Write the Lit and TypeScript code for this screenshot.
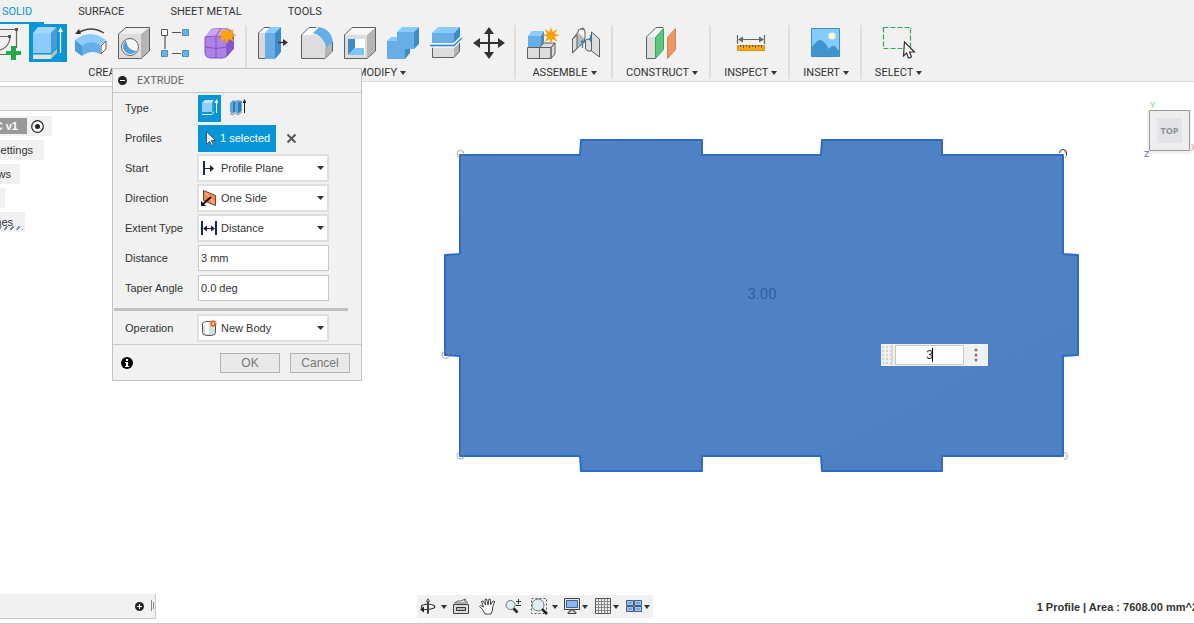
import { LitElement, html, css, svg, nothing } from "lit";
import { customElement, state, property } from "lit/decorators.js";

const INK = "#5f5f5f";

const icons: Record<string, unknown> = {
  sketch: svg`<g fill="none" stroke="#666" stroke-width="1.2"><path d="M0 2.5h26M27.5 4v17M4 27.5h16M1 9.5h20"/><path d="M21 9c0 9-6 15-16 15"/></g><path fill="#555" d="M26 1h3v3h-3zM19 8h3v3h-3z"/><path fill="#23a84c" d="M22 19h5v5h5v4h-5v5h-5v-5h-5v-4h5z"/>`,
  extrude: svg`<path fill="#a3d7fd" d="M1 6 6 0h19l-6 6z"/><path fill="#8bcbfd" d="M1 6h18v20H1z"/><path fill="#4b9bd6" d="m19 6 6-6v20l-6 6z"/><path fill="#e2e2e2" d="M1 27.500h18V32H1z"/><path fill="#bcbcbc" d="m19 27.500 6-6V26l-6 6z"/><path d="M28.500 4v22" stroke="#fff" stroke-width="1.300"/><path fill="#fff" d="m28.500 0 2.500 5h-5z"/>`,
  revolve: svg`<path fill="#8bcbfd" d="M0 13Q15 1 31 13l-6 6q-9-6-18 1z"/><path fill="#4b9bd6" d="M0 13l7 6v10l-7-5z"/><path fill="#66aee5" d="M7 19q9-7 18-1v9q-9-5-18 2z"/><path d="m26 19 5-5v8l-5 5z" fill="#fff" stroke="#555"/><path d="M3 6q13-8 26 0" fill="none" stroke="#444" stroke-width="1.300"/><path fill="#333" d="m0 7 4-5 2 5z"/>`,
  hole: svg`<path fill="#ddd" d="M1 7h22v24H1z"/><path fill="#efefef" d="m1 7 7-6h23l-8 6z"/><path fill="#b5b5b5" d="m23 7 8-6v23l-8 7z"/><path fill="none" stroke="${INK}" d="M.5 7 8 .5h23.500V24L23 31.500H.5z"/><circle cx="12" cy="20" r="8.500" fill="#f5f5f5" stroke="#666"/><path fill="#4e9fdc" d="M8 13.500A7.500 7.500 0 1 0 18.500 24q-9 0-10.500-10.500z"/>`,
  pattern: svg`<path d="M4 9v13M11 5.500h9M11 26.500h9" stroke="#555" stroke-width="1.200"/><path fill="#fff" stroke="#555" d="M.5 2.500h6v6h-6z"/><path fill="#69b2e8" stroke="#4b91c7" d="M21.500 2.500h6v6h-6zM.5 23.500h6v6h-6zM21.500 23.500h6v6h-6z"/>`,
  form: svg`<path fill="#ad82e8" d="m1 10 6-8q2-1 5-1h10q8 1 8 8v12l-7 8q-2 2-5 2H6q-5-1-5-6z"/><path fill="#c9a6f5" d="M2 10q4-8 8-8h12l-5 8z"/><path fill="#8659c8" d="m22 10 8-3v14l-7 8z"/><path fill="none" stroke="#8453c0" d="M1 10q11-2 22 0v19M1 20q12 3 22 0l7-6M12 9v22M12 9l5-8M1 10v15q0 6 6 6h11q3 0 5-2l7-8"/><path fill="#fba505" d="m23 0 2 5 5-3-2 5 5 1-5 2 2 5-5-3-2 5-2-5-5 3 2-5-5-2 5-1-2-5 5 3z"/>`,
  press: svg`<path fill="#fff" d="m1 6 5-5h5L7 6z"/><path fill="#d8d8d8" d="M1 6h6v25H1z"/><path fill="none" stroke="${INK}" d="M7 31.500H.5V6L6 .5h6"/><path fill="#8bcbfd" d="m7 6 5-6h11l-6 6z"/><path fill="#66aee5" d="M7 6h10v26H7z"/><path fill="#3e8bc8" d="m17 6 6-6v25l-6 7z"/><path stroke="#333" d="M20 15.500h7" stroke-width="1.400"/><path fill="#333" d="m25 12 5 3.500-5 3.500z"/>`,
  fillet: svg`<path fill="#ddd" d="M1 8h12q11 2 11 15v8H1z"/><path fill="#fff" d="m1 8 7-7h8l-5 7z"/><path fill="#b5b5b5" d="m24 21 7-6v9l-7 7z"/><path fill="none" stroke="${INK}" d="M15 .5H8L.5 8v23.500H24l7.500-7.500V15"/><path fill="#66aee5" d="M18 0q12 2 14 15l-7 6Q23 9 12 6z"/>`,
  shell: svg`<path fill="#ddd" d="M1 8h22v23H1z"/><path fill="#f5f5f5" d="m1 8 7-7h23l-8 7z"/><path fill="#b5b5b5" d="m23 8 8-7v23l-8 7z"/><path fill="none" stroke="${INK}" d="M.5 8 8 .5h23.500V24L23 31.500H.5z"/><path fill="#fff" d="M4 12h17v16H4z"/><path fill="#3e8bc8" d="M4 12h7v9l-7 7z"/><path fill="#7fc5fa" d="m4 28 7-7h9v7z"/>`,
  combine: svg`<path fill="#8bcbfd" d="m0 14 4-4h7v4zM10 5l5-5h17l-5 5z"/><path fill="#66aee5" d="M0 14h10V5h17v17h-9v10H0z"/><path fill="#3e8bc8" d="m27 5 5-5v17l-5 5zM18 22h5v4l-5 6z"/>`,
  split: svg`<path fill="#8bcbfd" d="m2 6 6-6h22l-6 6z"/><path fill="#66aee5" d="M2 6h22v10H2z"/><path fill="#3e8bc8" d="m24 6 6-6v10l-6 6z"/><path fill="#ddd" d="M2 21h22v9H2z"/><path fill="#b5b5b5" d="m24 21 5-5v9l-5 5z"/><path fill="none" stroke="${INK}" d="M2.500 20.500v10H24l5.500-6V15"/><path fill="none" stroke="#f1f1f1" stroke-width="4" d="M0 18.500h24l8-8"/><path fill="none" stroke="#1d87d8" stroke-width="1.300" d="M0 18.500h24l8-7.500"/>`,
  move: svg`<path fill="none" stroke="#333" stroke-width="2" d="M16 4v24M4 16h24"/><path fill="#333" d="m16 0 5 7H11zM16 32l5-7H11zM0 16l7-5v10zM32 16l-7-5v10z"/>`,
  component: svg`<path fill="#8bcbfd" d="m1 9 4-5h12l-3 5z"/><path fill="#66aee5" d="M1 9h13v11H1z"/><path fill="#3e8bc8" d="m14 9 3-5v11l-3 5z"/><path fill="#ddd" stroke="${INK}" d="M.5 20.500h12v11H.5zM12.500 20.500 17 16h11l-4 4.500zM12.500 20.500H24v11H12.500zM24 20.500l4-4.500v11l-4 4.500z"/><path fill="#f7a105" d="m24 0 1.500 5 5-3-3 5 5 1-5 2 3 5-5-3-1.500 5-1.500-5-5 3 3-5-5-2 5-1-3-5 5 3z"/>`,
  joint: svg`<g stroke="${INK}"><path fill="#bbb" d="m2.500 12 7-9q4-4 5 0v12l-6 5-6 6z"/><path fill="#ddd" d="M7 8v13l-4.500 5V12zM29.500 12l-8-7v19l8 6zM21.500 13q-6-2-6 1v8q2 3 6 2"/><path fill="#f6f6f6" d="M8 5q0-3 3-3t4 2v8"/></g><path stroke="#1d87d8" stroke-width="1.300" d="M12.500 15v6M20.500 8v5"/><path fill="#1d87d8" d="m12.500 12 2 4h-4zM20.500 15l2-4h-4z"/>`,
  plane: svg`<path fill="#ddd" d="M1 10h8v21H1z"/><path fill="#f8f8f8" d="m1 10 9-9h7L9 10z"/><path fill="none" stroke="${INK}" d="M9 31.500H.5V10L10 .5h7"/><path fill="#5ac77f" stroke="#39a35b" d="m9.500 10.500 8-9v21l-8 9z"/><path fill="#e99860" stroke="#cf8452" d="m21.500 10.500 8-9v21l-8 9z"/>`,
  measure: svg`<path fill="none" stroke="#666" stroke-width="1.200" d="M2.500 8v9M29.500 8v9M4 12.500h24"/><path fill="#666" d="m3 12.500 5-3v6zM29 12.500l-5-3v6z"/><path fill="#fba919" stroke="#dc910c" d="M2.500 18.500h27v5h-27z"/><path stroke="#6b592a" d="M5.500 18v2M8.500 18v3M11.500 18v2M14.500 18v3M17.500 18v2M20.500 18v3M23.500 18v2M26.500 18v3"/>`,
  image: svg`<path fill="#84cbff" stroke="#3d8dcb" d="M1.500 1.500h28v28h-28z"/><path fill="#3f93ce" d="M2 20q5-7 8-7 4 0 9 9 3-5 6-3l4 5v5H2z"/><circle cx="22" cy="9" r="3.500" fill="#fffbd0"/>`,
  select: svg`<path fill="none" stroke="#2aab58" stroke-width="1.200" stroke-dasharray="5 2" d="M.5.5h27v21H.5z"/><path fill="#fff" stroke="#333" stroke-width="1.200" d="m21.500 15 10 10h-5l2 5-3 1-2-5-3 3z"/>`,
};

const cursor = svg`<path fill="#eee" stroke="#456" d="m4.500 1.500 9 9h-4l2 4-2 1-2-4-3 3z"/>`;

@customElement("cad-icon")
export class CadIcon extends LitElement {
  @property() name = "";
  static styles = css`:host{display:block;width:32px;height:32px}svg{display:block;overflow:visible}`;
  render() {
    return html`<svg width="32" height="32" viewBox="0 0 32 32" aria-hidden="true">${icons[this.name] ?? nothing}</svg>`;
  }
}

const groups = [
  { label: "CREATE", tools: ["sketch", "extrude", "revolve", "hole", "pattern", "form"] },
  { label: "MODIFY", tools: ["press", "fillet", "shell", "combine", "split", "move"] },
  { label: "ASSEMBLE", tools: ["component", "joint"] },
  { label: "CONSTRUCT", tools: ["plane"] },
  { label: "INSPECT", tools: ["measure"] },
  { label: "INSERT", tools: ["image"] },
  { label: "SELECT", tools: ["select"] },
];

@customElement("cad-header")
export class CadHeader extends LitElement {
  static styles = css`
    :host { display: block; background: #f1f1f1; border-bottom: 1px solid #dcdcdc; overflow: hidden; font: 11px/14px Roboto, sans-serif; color: #333; }
    button { font: inherit; color: inherit; background: none; border: 0; padding: 0; margin: 0; }
    .tabs { display: flex; gap: 22px; margin-left: -10px; }
    .tab { box-sizing: border-box; height: 24px; padding: 2px 12px 0; border-bottom: 2px solid transparent; white-space: nowrap; }
    .tab.on { color: #0696d7; border-color: #0696d7; }
    .tools { display: flex; margin-left: -22px; height: 57px; }
    .group { display: flex; flex-direction: column; align-items: center; padding: 0 6px 0 8px; }
    .group + .group { border-left: 2px solid #dedede; border-image: linear-gradient(transparent 2px, #dedede 2px, #dedede 54px, transparent 54px) 1; }
    .row { display: flex; gap: 5px; }
    .tool { width: 38px; height: 38px; display: grid; place-items: center; }
    .tool.on { background: #0696d7; }
    .label { display: flex; align-items: center; gap: 3px; padding: 4px 5px 0; white-space: nowrap; }
    .caret { width: 0; border: 3px solid transparent; border-top: 4px solid #333; border-bottom: 0; }
  `;
  render() {
    return html`
      <nav class="tabs">
        ${["SOLID", "SURFACE", "SHEET METAL", "TOOLS"].map((t, i) => html`<button class="tab ${i ? "" : "on"}">${t}</button>`)}
      </nav>
      <div class="tools">
        ${groups.map((g) => html`<div class="group">
          <div class="row">${g.tools.map((t) => html`<button class="tool ${t === "extrude" ? "on" : ""}" aria-label=${t}><cad-icon name=${t}></cad-icon></button>`)}</div>
          <button class="label">${g.label}<span class="caret"></span></button>
        </div>`)}
      </div>`;
  }
}

const fieldIcons: Record<string, unknown> = {
  start: svg`<path stroke="#142a58" stroke-width="2" d="M3 1v14"/><path stroke="#223" d="M4 8.500h7"/><path fill="#223" d="m9 5 4 3.500L9 12z"/>`,
  direction: svg`<path fill="#f58a48" stroke="#6b4632" d="m2.500.5 12 5v10l-12-5z"/><path stroke="#ffb382" stroke-width="2" d="m5 3 8 10"/><path stroke="#111" stroke-width="2" d="m2 14 8-7"/><path fill="#111" d="M0 16v-5l5 5z"/>`,
  distance: svg`<path stroke="#142a58" stroke-width="2" d="M1 1v14M15 1v14"/><path stroke="#223" d="M3 8.500h10"/><path fill="#223" d="m2 8.500 4-3v6zM14 8.500l-4-3v6z"/>`,
  body: svg`<path fill="#d9dce2" stroke="#455" d="M1.500 4q0-2.500 6-2.500h2q5 1 5 3v8q0 3-6.500 3t-6.500-3z"/><path fill="#fff" d="M4 5h4v9H4z"/><ellipse cx="7" cy="4" rx="5" ry="2" fill="#fff"/><path stroke="#e3442c" stroke-width="1.300" d="M12 0v7M8.500 3.500h7M9.500 1l5 5M14.500 1l-5 5"/><circle cx="12" cy="3.500" r="1.500" fill="#ffd44a"/>`,
};

@customElement("extrude-dialog")
export class ExtrudeDialog extends LitElement {
  @state() private distance = "3 mm";
  @state() private taper = "0.0 deg";
  static styles = css`
    :host { display: block; box-sizing: border-box; background: #f1f1f1; border: 1px solid #c3c3c3; font: 11px/14px "Liberation Sans", Arial, sans-serif; color: #333; }
    button, input, select { font: inherit; color: inherit; margin: 0; border-radius: 0; box-sizing: border-box; }
    header { display: flex; align-items: center; gap: 10px; height: 23px; padding-left: 5px; border-bottom: 1px solid #c8c8c8; font-family: Roboto, sans-serif; color: #666; }
    svg { display: block; }
    .row { display: grid; grid-template-columns: 72px 132px; align-items: center; height: 30px; padding-left: 12px; }
    .pair { display: flex; align-items: center; padding-left: 1px; }
    .kind { width: 23px; height: 27px; border: 0; background: none; padding: 0; display: grid; place-items: center; margin-right: 5px; }
    .kind.on { background: #0696d7; }
    .picked { background: #0696d7; color: #fff; border: 0; height: 27px; padding: 0 6px 0 4px; display: flex; align-items: center; gap: 2px; white-space: nowrap; }
    .clear { border: 0; background: none; padding: 0; margin-left: 11px; }
    .choice { display: grid; align-items: center; background: #fff; border: 2px solid #dfdfdf; height: 28px; box-sizing: border-box; }
    .choice > * { grid-area: 1 / 1; }
    .choice svg { margin-left: 2px; pointer-events: none; }
    .choice svg.caret { justify-self: end; margin-right: 3px; }
    select { appearance: none; width: 100%; height: 24px; border: 0; background: none; padding: 0 0 0 22px; }
    .row input { width: 131px; height: 26px; border: 1px solid #c8c8c8; background: #fff; padding: 0 2px; margin-left: 1px; }
    hr { border: 0; height: 3px; background: #c0c0c0; margin: 5px 13px 2px 1px; }
    footer { display: flex; align-items: center; gap: 10px; border-top: 1px solid #c8c8c8; padding: 8px 11px 7px 8px; margin-top: 1px; }
    footer button { width: 60px; height: 20px; padding: 0; border: 1px solid #b3b3b3; background: #e9e9e9; color: #777; font-size: 12px; }
    .info { margin-right: auto; }
  `;
  private choice(id: string, label: string, value: string, icon: string) {
    return html`<div class="row"><label for=${id}>${label}</label>
      <div class="choice"><select id=${id}><option>${value}</option></select>
        <svg width="16" height="16" viewBox="0 0 16 16">${fieldIcons[icon]}</svg>
        <svg class="caret" width="7" height="4" viewBox="0 0 7 4"><path fill="#333" d="M0 0h7L3.500 4z"/></svg>
      </div></div>`;
  }
  render() {
    return html`
      <header><svg width="9" height="9" viewBox="0 0 9 9"><circle cx="4.500" cy="4.500" r="4.500" fill="#222"/><path stroke="#fff" d="M2 4.500h5"/></svg>EXTRUDE</header>
      <div class="row"><span>Type</span><div class="pair">
        <button class="kind on" aria-label="Extrude"><svg width="16" height="18" viewBox="0 0 16 18"><path fill="#c3e5fe" d="m0 4 3-3h9l-2 3z"/><path fill="#8fcdfa" d="M0 4h10v9H0z"/><path fill="#4694cd" d="m10 4 2-3v9l-2 3z"/><path fill="none" stroke="#fff" d="M0 15.500h10l2-3M14.500 2v12"/><path fill="#fff" d="m14.500 0 2 4h-4z"/></svg></button>
        <button class="kind" aria-label="Thin extrude"><svg width="16" height="18" viewBox="0 0 16 18"><path fill="#5ba9de" d="m0 4 3-3 2 1 3-1 4 1v10l-4 3-3-2-3 2-2-2z"/><path fill="#3079b3" d="m3 4 2-2v11l-2 1zM8 4l3-2v10l-3 2z"/><path fill="none" stroke="#999" d="m0 15 3 1 2-2 3 2 4-3"/><path stroke="#222" d="M14.500 2v12"/><path fill="#222" d="m14.500 0 2 4h-4z"/></svg></button>
      </div></div>
      <div class="row"><span>Profiles</span><div class="pair">
        <button class="picked"><svg width="16" height="16" viewBox="0 0 16 16">${cursor}</svg>1 selected</button>
        <button class="clear" aria-label="Clear"><svg width="9" height="9" viewBox="0 0 9 9"><path stroke="#555" stroke-width="2" d="m.5.5 8 8M8.500.5l-8 8"/></svg></button>
      </div></div>
      ${this.choice("start", "Start", "Profile Plane", "start")}
      ${this.choice("direction", "Direction", "One Side", "direction")}
      ${this.choice("extent", "Extent Type", "Distance", "distance")}
      <div class="row"><label for="dist">Distance</label><input id="dist" .value=${this.distance} @input=${(e: Event) => (this.distance = (e.target as HTMLInputElement).value)} /></div>
      <div class="row"><label for="taper">Taper Angle</label><input id="taper" .value=${this.taper} @input=${(e: Event) => (this.taper = (e.target as HTMLInputElement).value)} /></div>
      <hr />
      ${this.choice("operation", "Operation", "New Body", "body")}
      <footer><svg class="info" width="12" height="12" viewBox="0 0 12 12"><circle cx="6" cy="6" r="6" fill="#000"/><path fill="#fff" d="M5 2h2v2H5zM4 5h3v4h1v1H4V9h1V6H4z"/></svg><button>OK</button><button>Cancel</button></footer>`;
  }
}

const navItems = [
  { id: "Orbit", caret: true, w: 18, art: svg`<path fill="none" stroke="#333" stroke-width="1.200" d="M4 11Q-1 7 9 6q9 1 6 4l-5 1.500H3"/><path fill="#fff" stroke="#444" d="M8.500 15.500v-12h-1L9 .8l1.500 2.700h-1v12z"/><path fill="#222" d="m1 11.500 4-3v6z"/>` },
  { id: "Look at", caret: false, w: 17, art: svg`<path fill="#ddd" stroke="#444" d="M.5 6.500h15v9H.5z"/><path fill="#bbb" stroke="#333" d="M3.500 9.500h9v3h-9z"/><path fill="#eee" stroke="#666" d="m1.500 5 3-2h3l5-2-1 2h2l1 2z"/>` },
  { id: "Pan", caret: false, w: 17, art: svg`<path fill="#fff" stroke="#444" stroke-linejoin="round" d="M5.500 15 4 12 .5 8.500l1-1L4.500 9 2.500 3.500l1.500-.5L6.500 7 6 1.500l1.500-.5L9 7l1-6 1.500.500L11.500 7l2.500-4 1.500.500L13.500 10v2L12 16H6z"/>` },
  { id: "Zoom", caret: false, w: 17, art: svg`<circle cx="5.500" cy="7" r="4.500" fill="#dbeef2" stroke="#777"/><path stroke="#222" stroke-width="2.500" d="m8.500 10.500 4 4"/><path stroke="#333" d="M11 3.500h5M13.500 1v5M11 7.500h5"/>` },
  { id: "Fit", caret: true, w: 17, art: svg`<path fill="none" stroke="#555" stroke-dasharray="2 2" d="M.5.5h15v15H.5z"/><circle cx="7" cy="7" r="6" fill="#dbeef2" stroke="#777"/><path stroke="#222" stroke-width="2.500" d="m11 11 5 5"/>` },
  { id: "Display", caret: true, w: 16, art: svg`<path fill="#e4e8ee" stroke="#444" d="M.5.5h15v11H.5z"/><path fill="#8fb8ec" stroke="#3863a0" d="M2.500 2.500h11v7h-11z"/><path fill="#ddd" stroke="#444" d="M6 12h4v2h2v1.500H4V14h2z"/>` },
  { id: "Grid", caret: true, w: 16, art: svg`<path fill="#eee" stroke="#555" d="M.5.5h15v15H.5z"/><path stroke="#888" d="M3.500 1v14M6.500 1v14M9.500 1v14M12.500 1v14M1 3.500h14M1 6.500h14M1 9.500h14M1 12.500h14"/>` },
  { id: "Viewports", caret: true, w: 16, art: svg`<path fill="#a9c5e8" stroke="#3c5f8d" d="M.5 2.500h7v5h-7zM8.500 2.500h7v5h-7zM.5 8.500h7v5h-7zM8.500 8.500h7v5h-7z"/><path fill="none" stroke="#7f9fc8" d="M2.500 4.500h3v1h-3zM10.500 4.500h3v1h-3zM2.500 10.500h3v1h-3zM10.500 10.500h3v1h-3z"/>` },
];

const tree = [
  { text: "Document Settings", w: 44, pad: 11 },
  { text: "Named Views", w: 20, pad: 9 },
  { text: "Origin", w: 5, pad: 5 },
  { text: "Sketches", w: 25, pad: 12 },
];

@customElement("app-root")
export class AppRoot extends LitElement {
  @state() private value = "3";
  static styles = css`
    :host { display: flex; flex-direction: column; height: 100vh; overflow: hidden; background: #fff; font: 11px/14px "Liberation Sans", Arial, sans-serif; color: #333; }
    * { box-sizing: border-box; }
    svg { display: block; }
    button, input { font: inherit; color: inherit; margin: 0; padding: 0; border: 0; background: none; }
    main { position: relative; flex: 1; min-height: 0; }
    .browser { width: 240px; padding-top: 4px; }
    .bar { height: 25px; background: #f1f1f1; border: 1px solid #c8c8c8; border-left: 0; margin-bottom: 5px; }
    .node { display: flex; align-items: center; justify-content: flex-end; height: 20px; margin-bottom: 4px; overflow: hidden; background: #f1f1f1; white-space: nowrap; }
    .root { width: 52px; padding-right: 8px; gap: 4px; }
    .name { display: flex; justify-content: flex-end; align-items: center; width: 27px; height: 16px; flex: none; background: #999; color: #fff; font-weight: 700; padding-right: 9px; }
    .hatch { height: 4px; width: 23px; background: repeating-linear-gradient(125deg, #7c8fae 0 2px, transparent 2px 5px); margin-top: -10px; }
    .drawing { position: absolute; left: 436px; top: 48px; }
    .dim { font: 15px Roboto, sans-serif; fill: #2f5da3; }
    .cube { position: absolute; right: 0; top: 16px; }
    .cube text { font-family: "Open Sans", sans-serif; }
    extrude-dialog { position: absolute; left: 112px; top: -14px; width: 250px; }
    .entry { position: absolute; left: 881px; top: 262px; display: flex; align-items: center; width: 107px; height: 22px; background: #f1f1f1; }
    .grip { width: 12px; height: 20px; border-right: 2px solid #d9d9d9; background: radial-gradient(#d4d4d4 1px, transparent 1px) 4px 0 / 4px 4px; margin-right: 2px; }
    .entry input { width: 69px; height: 20px; background: #fff; border: 1px solid #c8c8c8; text-align: center; font-size: 12px; }
    .box { position: relative; display: flex; }
    .caret-line { position: absolute; left: 37px; top: 3px; width: 1px; height: 14px; background: #000; }
    .more { margin-left: 10px; }
    footer { display: flex; align-items: flex-start; height: 30px; border-bottom: 1px solid #c8c8c8; }
    .left { flex: 13 1 0; }
    .timeline { display: flex; align-items: center; justify-content: flex-end; gap: 7px; width: 156px; height: 25px; background: #f1f1f1; border: 1px solid #c8c8c8; border-width: 0 1px 1px 0; }
    .nav { display: flex; align-items: center; height: 23px; background: #f1f1f1; margin-top: 1px; padding: 0 3px 0 2px; }
    .nav button { display: flex; align-items: center; gap: 4px; margin-right: 9px; }
    .nav button.menu { margin-right: 6px; }
    .nav button.tight { gap: 2px; margin-right: 7px; }
    .nav button:last-child { margin-right: 0; }
    .status { flex: 17 1 0; text-align: right; font-weight: 700; white-space: nowrap; padding-top: 6px; margin-right: -4px; }
  `;
  render() {
    return html`
      <cad-header></cad-header>
      <main>
        <aside class="browser">
          <div class="bar"></div>
          <div class="node root"><span class="name">C v1</span><svg width="13" height="13" viewBox="0 0 13 13"><circle cx="6.500" cy="6.500" r="5.800" fill="#fff" stroke="#222" stroke-width="1.200"/><circle cx="6.500" cy="6.500" r="2.500" fill="#222"/></svg></div>
          ${tree.map((n) => html`<div class="node" style="width:${n.w}px;padding-right:${n.pad}px"><span>${n.text}</span></div>`)}
          <div class="hatch"></div>
        </aside>
        <svg class="drawing" width="650" height="350" viewBox="436 130 650 350">
          <defs><linearGradient id="g" x2="1" y2="1"><stop stop-color="#5182c6"/><stop offset="1" stop-color="#4e80c4"/></linearGradient></defs>
          <path fill="url(#g)" stroke="#2e6bc5" stroke-width="2" stroke-linejoin="round" d="M460 155H580l1-15H702v15H821l1-15H942v15h121V254l15 1V355l-15 1V456H942v15H822l-1-15H702v15H581l-1-15H460V356l-15-1V255l15-1z"/>
          <g fill="none" stroke="#888" stroke-opacity=".7"><circle cx="460.500" cy="154" r="3.500"/><circle cx="445.500" cy="355" r="3.500"/><circle cx="460.500" cy="455.500" r="3.500"/><path d="M1064 151.500a3.500 3.500 0 0 1 1 6.500M1064 452.500a3.500 3.500 0 0 1 0 7"/></g>
          <path fill="none" stroke="#333" d="M1059.500 153a3.500 3.500 0 0 1 7 0v2"/>
          <text class="dim" x="762" y="299" text-anchor="middle">3.00</text>
        </svg>
        <svg class="cube" width="50" height="60" viewBox="1144 98 50 60">
          <path fill="#ddd" d="M1147 110h44v44h-44z" opacity=".4"/><path fill="#eee" stroke="#999" d="M1149.500 110.500h40v40h-40z"/><path fill="#e2e4e7" d="M1157 118h25v25h-25z"/>
          <text x="1169.500" y="134" text-anchor="middle" font-size="9" font-weight="700" fill="#8b9098">TOP</text>
          <text x="1150" y="108" font-size="9" font-weight="600" fill="#7dee7d">Y</text><text x="1144" y="157" font-size="9" font-weight="600" fill="#7777f0">Z</text><text x="1191" y="151" font-size="9" fill="#f77">X</text>
        </svg>
        <div class="entry"><span class="grip"></span><span class="box"><input aria-label="Distance" .value=${this.value} @input=${(e: Event) => (this.value = (e.target as HTMLInputElement).value)} /><span class="caret-line"></span></span>
          <button class="more" aria-label="More"><svg width="4" height="14" viewBox="0 0 4 14" fill="#777"><circle cx="2" cy="2" r="1.500"/><circle cx="2" cy="7" r="1.500"/><circle cx="2" cy="12" r="1.500"/></svg></button></div>
        <extrude-dialog></extrude-dialog>
      </main>
      <footer>
        <div class="left"><div class="timeline"><svg width="9" height="9" viewBox="0 0 9 9"><circle cx="4.500" cy="4.500" r="4.500" fill="#222"/><path stroke="#fff" d="M2 4.500h5M4.500 2v5"/></svg><svg width="4" height="12" viewBox="0 0 4 12"><path stroke="#888" d="M.5 0v11M2.500 2v7"/></svg></div></div>
        <div class="nav">${navItems.map((n, i) => html`<button class="${n.caret ? "menu" : ""} ${i > 4 ? "tight" : ""}" aria-label=${n.id}><svg width=${n.w} height="17" viewBox="0 0 ${n.w} 17">${n.art}</svg>${n.caret ? html`<svg width="6" height="4" viewBox="0 0 6 4"><path fill="#333" d="M0 0h6L3 4z"/></svg>` : nothing}</button>`)}</div>
        <div class="status">1 Profile | Area : 7608.00 mm^2</div>
      </footer>`;
  }
}
